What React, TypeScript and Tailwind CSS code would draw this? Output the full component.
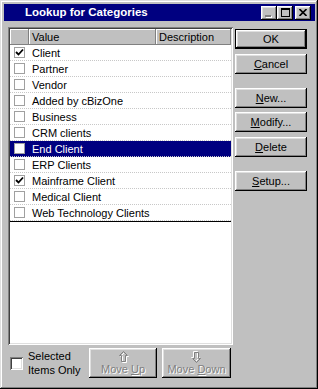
import React from 'react';

const raised =
  'shadow-[inset_-1px_-1px_#000,inset_1px_1px_#fff,inset_-2px_-2px_#808080,inset_2px_2px_#dfdfdf]';
const sunken =
  'shadow-[inset_1px_1px_#808080,inset_-1px_-1px_#fff,inset_2px_2px_#404040,inset_-2px_-2px_#dfdfdf]';
const headerCell = 'shadow-[inset_-1px_-1px_#808080,inset_1px_1px_#fff]';

const items = [
  { label: 'Client', checked: true },
  { label: 'Partner' },
  { label: 'Vendor' },
  { label: 'Added by cBizOne' },
  { label: 'Business' },
  { label: 'CRM clients' },
  { label: 'End Client', selected: true },
  { label: 'ERP Clients' },
  { label: 'Mainframe Client', checked: true },
  { label: 'Medical Client' },
  { label: 'Web Technology Clients' },
];

const Check = () => (
  <svg width="9" height="9" viewBox="0 0 9 9" className="block">
    <path d="M1 4 L3.5 6.5 L8 1.5" stroke="#000" strokeWidth="1.8" fill="none" />
  </svg>
);

const Btn = ({ children, isDefault }: { children: React.ReactNode; isDefault?: boolean }) => (
  <div className={`h-[20px] w-[72px] bg-[#c0c0c0] ${isDefault ? 'border border-black' : ''}`}>
    <div className={`w-full h-full flex items-center justify-center ${raised}`}>{children}</div>
  </div>
);

const U = ({ children }: { children: React.ReactNode }) => (
  <span className="underline underline-offset-[1px]">{children}</span>
);

const Arrow = ({ down }: { down?: boolean }) => (
  <svg width="11" height="12" viewBox="0 0 11 12" className={down ? 'rotate-180' : ''}>
    <path d="M6.5 1.5 L10.5 5.5 L8.5 5.5 L8.5 11.5 L4.5 11.5 L4.5 5.5 L2.5 5.5 Z" stroke="#fff" fill="none" />
    <path d="M5.5 0.5 L9.5 4.5 L7.5 4.5 L7.5 10.5 L3.5 10.5 L3.5 4.5 L1.5 4.5 Z" stroke="#808080" fill="none" />
  </svg>
);

const TitleBtn = ({ children }: { children: React.ReactNode }) => (
  <div className={`w-[16px] h-[14px] bg-[#c0c0c0] flex items-center justify-center ${raised}`}>{children}</div>
);

export default function App() {
  return (
    <div
      className="w-[318px] h-[389px] bg-[#c0c0c0] text-[11px] text-black flex flex-col pt-[4px] pl-[4px] pr-[3px] shadow-[inset_-1px_-1px_#000,inset_1px_1px_#dfdfdf,inset_-2px_-2px_#808080,inset_2px_2px_#fff]"
      style={{ fontFamily: '"Liberation Sans", Arial, sans-serif' }}
    >
      {/* title bar */}
      <div className="h-[17px] bg-[#000080] flex items-center pl-[21px] pr-[4px]">
        <span className="text-white font-bold text-[11.5px] flex-1 pt-px">Lookup for Categories</span>
        <div className="flex items-center">
          <TitleBtn>
            <div className="w-[6px] h-[2px] bg-[#808080] mt-[6px] -ml-[2px] shadow-[1px_1px_#fff]" />
          </TitleBtn>
          <TitleBtn>
            <div className="w-[9px] h-[9px] border border-black border-t-2" />
          </TitleBtn>
          <div className="w-[2px]" />
          <TitleBtn>
            <svg width="8" height="7" viewBox="0 0 8 7">
              <path d="M0.5 0 L7.5 7 M7.5 0 L0.5 7" stroke="#000" strokeWidth="1.6" />
            </svg>
          </TitleBtn>
        </div>
      </div>

      <div className="flex pl-[4px] pt-[6px]">
        {/* left */}
        <div className="flex flex-col w-[225px]">
          <div className={`h-[318px] bg-white p-[2px] ${sunken}`}>
            <div className="flex h-[16px] bg-[#c0c0c0]">
              <div className={`w-[19px] ${headerCell}`} />
              <div className={`w-[127px] pl-[3px] pt-px flex items-center ${headerCell}`}>Value</div>
              <div className={`flex-1 pl-[3px] pt-px flex items-center ${headerCell}`}>Description</div>
            </div>
            {items.map((it) => (
              <div
                key={it.label}
                className={`flex items-center h-[16px] border-b border-dotted border-[#c8c8c8] ${
                  it.selected ? 'bg-[#000080] text-white' : ''
                }`}
              >
                <div className="ml-[4px] w-[11px] h-[11px] border border-[#a0a0a0] bg-white flex items-center justify-center">
                  {it.checked && <Check />}
                </div>
                <span className="ml-[7px] pt-px">{it.label}</span>
              </div>
            ))}
            <div className="h-px bg-black" />
          </div>

          {/* bottom controls */}
          <div className="flex items-center mt-[3px] h-[30px]">
            <div className="w-[81px] flex items-center">
              <div className={`ml-[2px] w-[13px] h-[13px] bg-white ${sunken}`} />
              <div className="ml-[5px] leading-[14px]">
                <div>Selected</div>
                <div>Items Only</div>
              </div>
            </div>
            <div className={`w-[68px] h-[30px] flex flex-col items-center justify-center text-[#808080] ${raised}`}>
              <Arrow />
              <span className="leading-[13px] [text-shadow:1px_1px_#fff]">
                Move <U>U</U>p
              </span>
            </div>
            <div className={`ml-[5px] w-[69px] h-[30px] flex flex-col items-center justify-center text-[#808080] ${raised}`}>
              <Arrow down />
              <span className="leading-[13px] [text-shadow:1px_1px_#fff]">
                Move <U>D</U>own
              </span>
            </div>
          </div>
        </div>

        {/* right buttons */}
        <div className="ml-[2px] flex flex-col">
          <div className="mt-[2px]">
            <Btn isDefault>OK</Btn>
          </div>
          <div className="mt-[5px]">
            <Btn>
              <span>
                <U>C</U>ancel
              </span>
            </Btn>
          </div>
          <div className="mt-[14px]">
            <Btn>
              <span>
                <U>N</U>ew...
              </span>
            </Btn>
          </div>
          <div className="mt-[4px]">
            <Btn>
              <span>
                <U>M</U>odify...
              </span>
            </Btn>
          </div>
          <div className="mt-[5px]">
            <Btn>
              <span>
                <U>D</U>elete
              </span>
            </Btn>
          </div>
          <div className="mt-[14px]">
            <Btn>
              <span>
                <U>S</U>etup...
              </span>
            </Btn>
          </div>
        </div>
      </div>
    </div>
  );
}
